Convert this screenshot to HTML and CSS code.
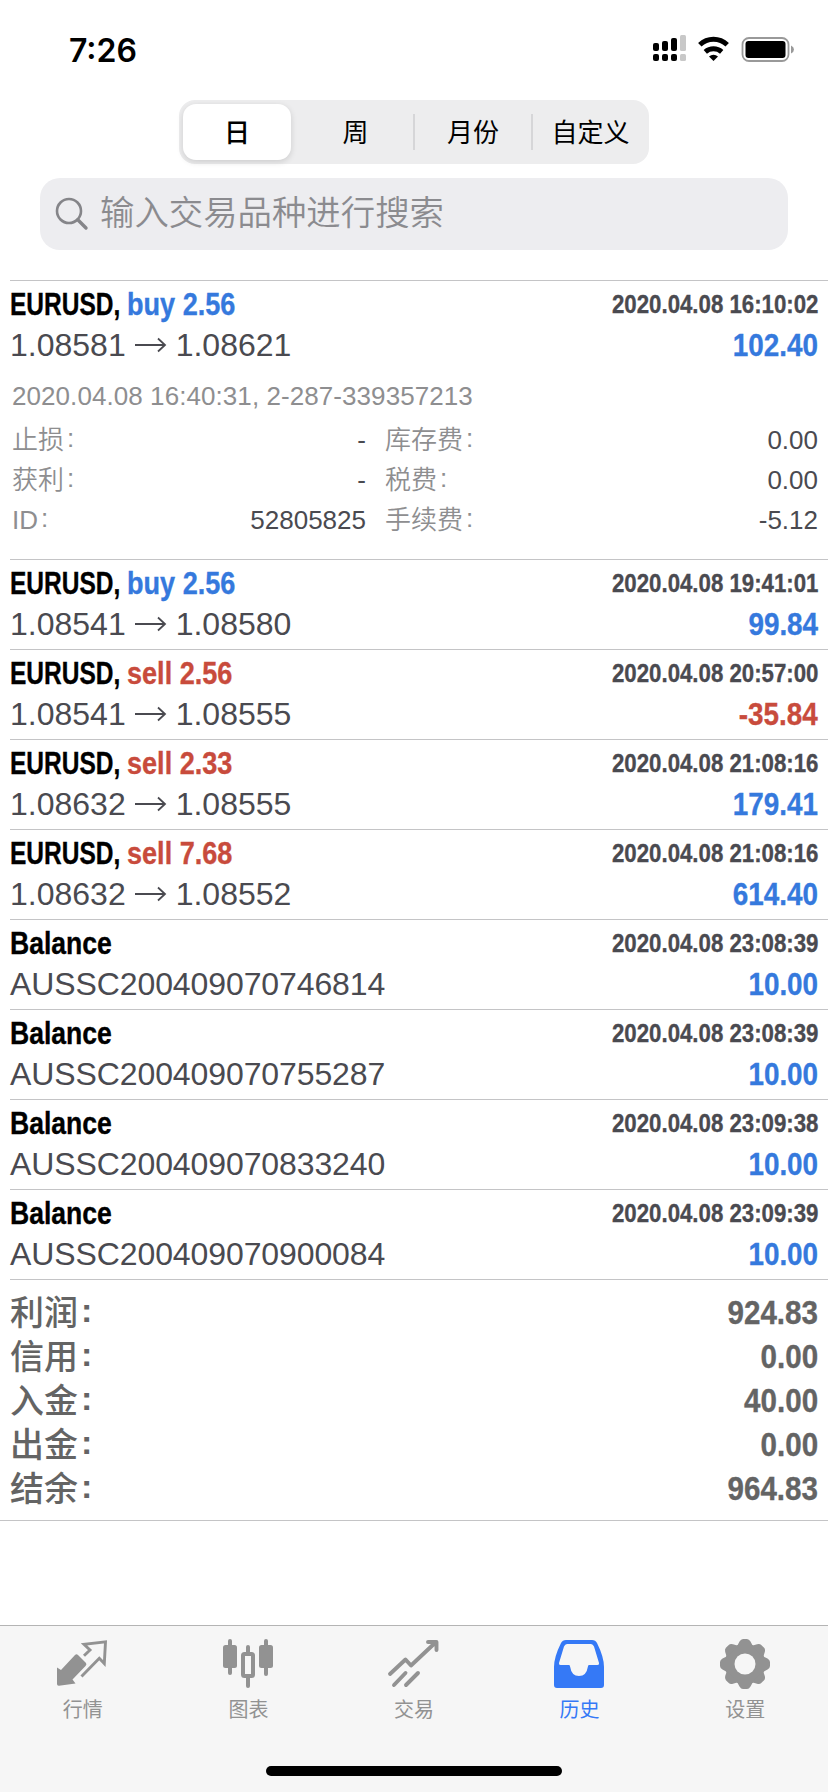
FILE: index.html
```html
<!DOCTYPE html>
<html lang="zh-CN">
<head>
<meta charset="utf-8">
<title>历史</title>
<link rel="stylesheet" href="styles.css">
</head>
<body>
<div class="screen">
  <header class="status">
    <span class="clock">7:26</span>
    <svg class="status-icons" width="144" height="30" viewBox="0 0 144 30">
      <g fill="#000">
        <rect x="1" y="8" width="6" height="8" rx="2"/><rect x="10" y="6" width="6" height="10" rx="2"/><rect x="19" y="3" width="6" height="13" rx="2"/>
        <rect x="1" y="19" width="6" height="7" rx="2"/><rect x="10" y="19" width="6" height="7" rx="2"/><rect x="19" y="19" width="6" height="7" rx="2"/>
      </g>
      <g fill="#c8c8c8"><rect x="28" y="0" width="6" height="16" rx="1.5"/><rect x="28" y="19" width="6" height="7" rx="1.5"/></g>
      <g fill="none" stroke="#000" stroke-width="5">
        <path d="M47.800 9.800A20 20 0 0 1 75.200 9.800"/>
        <path d="M53.300 16.800A12.500 12.500 0 0 1 69.700 16.800"/>
      </g>
      <path d="M61.500 26L57 21.500A7 7 0 0 1 66 21.500Z"/>
      <rect x="90.500" y="3" width="46" height="23" rx="6.500" fill="none" stroke="#999" stroke-width="1.800"/>
      <rect x="93.500" y="6" width="40" height="17" rx="3"/>
      <path d="M139 10.500Q142 12 142 14.500T139 18.500Z" fill="#999"/>
    </svg>
  </header>

  <nav class="segments">
    <span class="segment active">日</span>
    <span class="segment">周</span>
    <span class="segment divided">月份</span>
    <span class="segment divided">自定义</span>
  </nav>

  <div class="search">
    <svg width="34" height="34" viewBox="0 0 34 34" fill="none" stroke="#858589" stroke-linecap="round">
      <circle cx="14" cy="14" r="12" stroke-width="2.600"/><path d="M22.800 22.800L31 31" stroke-width="3.400"/>
    </svg>
    <span class="placeholder">输入交易品种进行搜索</span>
  </div>

  <main class="history">
    <section class="deal expanded">
      <div class="row"><div class="title"><b class="symbol">EURUSD,</b><b class="side buy">buy 2.56</b></div><time>2020.04.08 16:10:02</time></div>
      <div class="row second"><span class="price">1.08581<svg class="arrow" viewBox="0 0 32 16"><path d="M0 8H30M23 1.500L30 8L23 14.500"/></svg>1.08621</span><b class="amount">102.40</b></div>
      <div class="details">
        <div class="comment">2020.04.08 16:40:31, 2-287-339357213</div>
        <div class="grid">
          <span class="label">止损<i>:</i></span><span class="value">-</span><span class="label">库存费<i>:</i></span><span class="value">0.00</span>
          <span class="label">获利<i>:</i></span><span class="value">-</span><span class="label">税费<i>:</i></span><span class="value">0.00</span>
          <span class="label">ID<i>:</i></span><span class="value">52805825</span><span class="label">手续费<i>:</i></span><span class="value">-5.12</span>
        </div>
      </div>
    </section>
    <section class="deal">
      <div class="row"><div class="title"><b class="symbol">EURUSD,</b><b class="side buy">buy 2.56</b></div><time>2020.04.08 19:41:01</time></div>
      <div class="row second"><span class="price">1.08541<svg class="arrow" viewBox="0 0 32 16"><path d="M0 8H30M23 1.500L30 8L23 14.500"/></svg>1.08580</span><b class="amount">99.84</b></div>
    </section>
    <section class="deal">
      <div class="row"><div class="title"><b class="symbol">EURUSD,</b><b class="side sell">sell 2.56</b></div><time>2020.04.08 20:57:00</time></div>
      <div class="row second"><span class="price">1.08541<svg class="arrow" viewBox="0 0 32 16"><path d="M0 8H30M23 1.500L30 8L23 14.500"/></svg>1.08555</span><b class="amount loss">-35.84</b></div>
    </section>
    <section class="deal">
      <div class="row"><div class="title"><b class="symbol">EURUSD,</b><b class="side sell">sell 2.33</b></div><time>2020.04.08 21:08:16</time></div>
      <div class="row second"><span class="price">1.08632<svg class="arrow" viewBox="0 0 32 16"><path d="M0 8H30M23 1.500L30 8L23 14.500"/></svg>1.08555</span><b class="amount">179.41</b></div>
    </section>
    <section class="deal">
      <div class="row"><div class="title"><b class="symbol">EURUSD,</b><b class="side sell">sell 7.68</b></div><time>2020.04.08 21:08:16</time></div>
      <div class="row second"><span class="price">1.08632<svg class="arrow" viewBox="0 0 32 16"><path d="M0 8H30M23 1.500L30 8L23 14.500"/></svg>1.08552</span><b class="amount">614.40</b></div>
    </section>
    <section class="deal">
      <div class="row"><div class="title"><b class="balance">Balance</b></div><time>2020.04.08 23:08:39</time></div>
      <div class="row second"><span class="reference">AUSSC200409070746814</span><b class="amount">10.00</b></div>
    </section>
    <section class="deal">
      <div class="row"><div class="title"><b class="balance">Balance</b></div><time>2020.04.08 23:08:39</time></div>
      <div class="row second"><span class="reference">AUSSC200409070755287</span><b class="amount">10.00</b></div>
    </section>
    <section class="deal">
      <div class="row"><div class="title"><b class="balance">Balance</b></div><time>2020.04.08 23:09:38</time></div>
      <div class="row second"><span class="reference">AUSSC200409070833240</span><b class="amount">10.00</b></div>
    </section>
    <section class="deal">
      <div class="row"><div class="title"><b class="balance">Balance</b></div><time>2020.04.08 23:09:39</time></div>
      <div class="row second"><span class="reference">AUSSC200409070900084</span><b class="amount">10.00</b></div>
    </section>
    <section class="summary">
      <div class="total"><span>利润<i>:</i></span><b>924.83</b></div>
      <div class="total"><span>信用<i>:</i></span><b>0.00</b></div>
      <div class="total"><span>入金<i>:</i></span><b>40.00</b></div>
      <div class="total"><span>出金<i>:</i></span><b>0.00</b></div>
      <div class="total"><span>结余<i>:</i></span><b>964.83</b></div>
    </section>
  </main>

  <footer class="tabbar">
    <nav class="tabs">
      <div class="tab">
        <svg viewBox="0 0 52 52"><path fill="#929292" d="M0 28.500L4 31L18 16Q19.500 14.500 21 16L29 24Q30 25.500 28.500 27L15.500 40.500L18.500 44.500L2 46.800Q0 47 0 45Z"/><path fill="none" stroke="#929292" stroke-width="2.900" d="M27 16.800L33 11L27 5.300L48.500 2.800L47.300 24.500L42.300 19.300L24.500 37.500"/></svg>
        <span>行情</span>
      </div>
      <div class="tab">
        <svg viewBox="0 0 52 52" fill="#929292"><rect x="1" y="6" width="14" height="23" rx="2.500"/><rect x="6" y="0" width="4" height="36" rx="2"/><rect x="37" y="6" width="14" height="23" rx="2.500"/><rect x="42" y="0" width="4" height="37" rx="2"/><rect x="24" y="6" width="4" height="9" rx="2"/><rect x="24" y="37" width="4" height="12" rx="2"/><rect x="21" y="15" width="10" height="22" rx="1.500" fill="#f6f6f6" stroke="#929292" stroke-width="4"/></svg>
        <span>图表</span>
      </div>
      <div class="tab">
        <svg viewBox="0 0 52 52" fill="none" stroke="#929292" stroke-width="3.900" stroke-linecap="round" stroke-linejoin="round"><path d="M2 35L17.500 20.500L23 26.500L48 3M40 3H48.500V11M6 46L17.500 34M18 46L30 34"/></svg>
        <span>交易</span>
      </div>
      <div class="tab selected">
        <svg viewBox="0 0 52 52"><path fill="#3579f6" fill-rule="evenodd" d="M12 1H38Q41.500 1 43 4Q50 18 50 28V46Q50 49 47 49H3Q0 49 0 46V28Q0 18 7 4Q8.500 1 12 1ZM13 5Q11 5 10 7.500L5 24Q4.500 26 6.500 26H15Q16 26 16.200 28Q17.500 37 25 37T33.800 28Q34 26 35 26H43.500Q45.500 26 45 24L40 7.500Q39 5 37 5Z"/></svg>
        <span>历史</span>
      </div>
      <div class="tab">
        <svg viewBox="0 0 52 52"><g fill="#929292"><circle cx="26" cy="25" r="20"/><path id="tooth" d="M17 8Q19 6 20.500 2.500Q22 0 24 0H28Q30 0 31.500 2.500Q33 6 35 8Z"/><use href="#tooth" transform="rotate(45 26 25)"/><use href="#tooth" transform="rotate(90 26 25)"/><use href="#tooth" transform="rotate(135 26 25)"/><use href="#tooth" transform="rotate(180 26 25)"/><use href="#tooth" transform="rotate(225 26 25)"/><use href="#tooth" transform="rotate(270 26 25)"/><use href="#tooth" transform="rotate(315 26 25)"/></g><circle cx="26" cy="25" r="10.500" fill="#f6f6f6"/></svg>
        <span>设置</span>
      </div>
    </nav>
    <div class="home-indicator"></div>
  </footer>
</div>
</body>
</html>
```
FILE: styles.css
```css
* { box-sizing: border-box; }
body { margin: 0; background: #fff; font-family: "Liberation Sans", "Noto Sans CJK SC", sans-serif; color: #000; }
i { font-style: normal; }
.screen { width: 828px; height: 1792px; display: flex; flex-direction: column; overflow: hidden; }

.status { height: 100px; flex: none; display: flex; justify-content: space-between; padding: 35px 32px 0 69px; }
.clock { font: 600 32px/32px Inter, sans-serif; }

.segments { width: 470px; height: 64px; flex: none; margin-left: 179px; padding: 4px 0 4px 4px; border-radius: 16px; background: #ededee; display: grid; grid-template-columns: 114px 117px 118px 117px; font-size: 26px; line-height: 58px; text-align: center; }
.segment { position: relative; height: 56px; }
.active { width: 108px; background: #fff; border-radius: 13px; font-weight: 500; box-shadow: 0 2px 6px rgba(0,0,0,.14); }
.divided::before { content: ""; position: absolute; left: -1px; top: 10px; width: 2px; height: 36px; background: #d6d6d8; }

.search { height: 72px; flex: none; margin: 14px 40px 0; border-radius: 20px; background: #ededf0; display: flex; align-items: center; padding-left: 15px; gap: 11px; color: #8b8b8f; }
.placeholder { font: 350 34.400px/60px "Noto Sans CJK SC", sans-serif; padding-bottom: 8px; }

.history { margin-top: 30px; flex: none; }
.deal { height: 90px; margin-left: 10px; padding: 6px 10px 0 0; border-top: 1px solid #c4c4c6; }
.expanded { height: 279px; }
.row { display: flex; justify-content: space-between; height: 34px; line-height: 34px; }
.second { height: 46px; line-height: 49px; }
.title, time, .amount, .total b { font-weight: 700; white-space: pre; -webkit-text-stroke: .35px; }
.title { font-size: 32px; display: flex; }
.symbol, .side, .balance { transform-origin: left; }
.symbol { width: 117px; transform: scaleX(.766); }
.balance { transform: scaleX(.83); }
.side { transform: scaleX(.846); }
.buy, .amount { color: #3579dd; }
.sell, .amount.loss { color: #c84b3c; }
time { font-size: 26px; line-height: 34px; color: #4a4a50; transform: scaleX(.855); transform-origin: right; }
.amount { font-size: 32px; transform: scaleX(.87); transform-origin: right; }
.price, .reference { font-size: 32px; color: #4a4a50; display: flex; align-items: center; height: 48px; line-height: 48px; }
.reference { letter-spacing: -.1px; }
.arrow { width: 32px; height: 16px; margin: 0 9px 0 9px; fill: none; stroke: #4a4a50; stroke-width: 1.800; }

.details { font-size: 26px; color: #8e8e90; padding: 14px 0 0 2px; }
.comment { line-height: 30px; letter-spacing: .070px; }
.grid { display: grid; grid-template-columns: 130px 224px 150px 1fr; grid-auto-rows: 40px; line-height: 40px; margin-top: 9px; }
.label { font-weight: 350; }
.label:nth-child(4n + 3) { margin-left: 19px; }
.label i { display: inline-block; transform: translateY(-2px); margin-left: 3px; }
.value { text-align: right; color: #4a4a50; }

.summary { height: 242px; border-bottom: 1px solid #c4c4c6; background: linear-gradient(#c4c4c6, #c4c4c6) 10px 0 / 100% 1px no-repeat; padding: 11px 10px 0; color: #646464; }
.total { height: 44px; line-height: 44px; display: flex; justify-content: space-between; font-size: 34px; font-weight: 500; }
.total span { padding-top: 1px; }
.total i { display: inline-block; transform: translateY(-3px); margin-left: 3px; font-weight: 700; }
.total b { font-size: 34px; transform: scaleX(.87); transform-origin: right; }

.tabbar { margin-top: auto; height: 167px; flex: none; background: #f6f6f6; border-top: 1px solid #b4b4b4; display: flex; flex-direction: column; align-items: center; }
.tabs { width: 100%; display: grid; grid-template-columns: repeat(5, 1fr); padding-top: 13px; }
.tab { display: flex; flex-direction: column; align-items: center; color: #929292; font-size: 20px; line-height: 28px; gap: 5px; }
.tab svg { width: 52px; height: 52px; overflow: visible; }
.selected { color: #3579f6; }
.home-indicator { width: 296px; height: 10px; border-radius: 5px; background: #000; margin-top: 42px; }
```
